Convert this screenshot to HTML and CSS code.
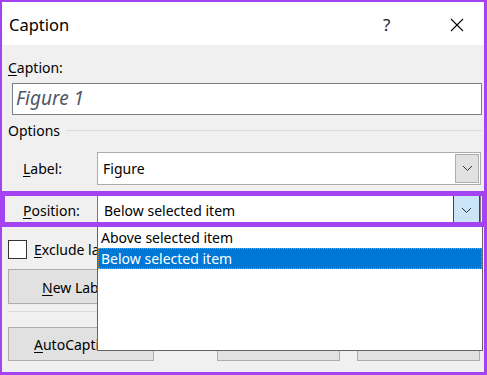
FILE: index.html
```html
<!DOCTYPE html>
<html lang="en">
<head>
    <meta charset="UTF-8">
    <title>Caption</title>
    <link rel="stylesheet" href="styles.css">
</head>
<body>

<div class="dialog">
    <div class="titlebar">
        <span class="title">Caption</span>
        <span class="help">?</span>
        <svg class="close" width="14" height="14" viewBox="0 0 14 14">
            <path d="M1 1 L13 13 M13 1 L1 13" stroke="#000" stroke-width="1.1" fill="none"/>
        </svg>
    </div>

    <div class="content">
        <div class="field-label"><u>C</u>aption:</div>
        <div class="caption-input">Figure 1</div>

        <div class="group-head">
            <span>Options</span>
            <span class="rule"></span>
        </div>

        <div class="row label-row">
            <span class="row-label"><u>L</u>abel:</span>
            <div class="combo">
                <span class="combo-text">Figure</span>
                <span class="combo-btn">
                    <svg width="11" height="7" viewBox="0 0 11 7"><path d="M1 1 L5.5 5.5 L10 1" stroke="#333" fill="none"/></svg>
                </span>
            </div>
        </div>

        <div class="row position-row">
            <span class="row-label"><u>P</u>osition:</span>
            <div class="combo focused">
                <span class="combo-text">Below selected item</span>
                <span class="combo-btn">
                    <svg width="11" height="7" viewBox="0 0 11 7"><path d="M1 1 L5.5 5.5 L10 1" stroke="#333" fill="none"/></svg>
                </span>
            </div>
        </div>

        <div class="check-row">
            <span class="checkbox"></span>
            <span class="clip check-text"><u>E</u>xclude label from caption</span>
        </div>

        <div class="btn-row first">
            <button class="btn wide"><span class="clip new-text"><u>N</u>ew Label...</span></button>
            <button class="btn"></button>
            <button class="btn"></button>
        </div>

        <div class="sep"></div>

        <div class="btn-row">
            <button class="btn wide"><span class="clip auto-text"><u>A</u>utoCaption...</span></button>
            <button class="btn"></button>
            <button class="btn"></button>
        </div>
    </div>

    <div class="highlight"></div>

    <ul class="droplist">
        <li>Above selected item</li>
        <li class="selected">Below selected item</li>
    </ul>
</div>

</body>
</html>
```

FILE: styles.css
```css
body {
    margin: 0;
    font-family: "Noto Sans", "Open Sans", sans-serif;
    font-size: 14px;
    color: #000;
    background: #fff;
}
.dialog {
    position: relative;
    width: 487px;
    height: 375px;
    box-sizing: border-box;
    border-style: solid;
    border-color: #a542f2;
    border-width: 2px 3px 3px 2px;
    background-color: #f0f0f0;
    overflow: hidden;
}
.titlebar {
    height: 43px;
    background-color: #fff;
    display: flex;
    align-items: center;
    padding-left: 7px;
}
.title {
    font-size: 16.5px;
    flex: 1;
    margin-top: 1px;
}
.help {
    font-size: 17px;
    color: #222;
    width: 67px;
    margin-top: 1px;
}
.close {
    margin-right: 20px;
    margin-top: 2px;
}
.content {
    padding: 0 2px 0 6px;
}
u {
    text-decoration-thickness: 1px;
    text-underline-offset: 2px;
}
.field-label {
    margin-top: 13px;
    height: 20px;
    line-height: 20px;
}
.caption-input {
    margin: 5px 0 0 4px;
    height: 32px;
    box-sizing: border-box;
    border: 1px solid #7a7f87;
    background-color: #fff;
    font-style: italic;
    font-size: 19px;
    line-height: 29px;
    padding-left: 3px;
    color: #4f5868;
}
.group-head {
    margin-top: 4px;
    height: 22px;
    display: flex;
    align-items: center;
    gap: 6px;
}
.group-head .rule {
    flex: 1;
    height: 1px;
    background-color: #dcdcdc;
}
.row {
    display: flex;
    align-items: center;
    height: 33px;
}
.label-row {
    margin-top: 11px;
}
.position-row {
    margin-top: 9px;
}
.row-label {
    width: 74px;
    padding-left: 15px;
}
.combo {
    width: 384px;
    height: 33px;
    box-sizing: border-box;
    border: 1px solid #acacac;
    background-color: #fff;
    display: flex;
    align-items: stretch;
    padding: 1px 1px 1px 0;
}
.combo-text {
    flex: 1;
    line-height: 29px;
    padding-left: 5px;
}
.combo-btn {
    width: 24px;
    box-sizing: border-box;
    border: 1px solid #adadad;
    background-color: #e1e1e1;
    display: flex;
    align-items: center;
    justify-content: center;
}
.focused {
    border-color: #7a7a7a;
    padding: 0;
}
.focused .combo-text {
    padding-left: 6px;
    line-height: 31px;
}
.focused .combo-btn {
    width: 27px;
    background-color: #cce4f7;
    border-color: #005499;
}
.check-row {
    margin-top: 13px;
    height: 19px;
    display: flex;
    align-items: center;
    gap: 7px;
}
.checkbox {
    width: 19px;
    height: 19px;
    box-sizing: border-box;
    border: 1px solid #333;
    background-color: #fff;
}
.clip {
    display: inline-block;
    overflow: hidden;
    white-space: nowrap;
    vertical-align: middle;
}
.check-text {
    width: 63px;
}
.btn-row {
    display: flex;
    margin-top: 15px;
    height: 34px;
}
.btn-row.first {
    margin-top: 10px;
    height: 35px;
}
.btn {
    font-family: inherit;
    font-size: 14px;
    width: 123px;
    height: 100%;
    border: 1px solid #adadad;
    background-color: #e1e1e1;
    padding: 0;
    margin-left: 17px;
    text-align: left;
}
.btn.wide {
    width: 146px;
    margin-left: 0;
    margin-right: 46px;
}
.new-text {
    margin-left: 33px;
    width: 56px;
}
.auto-text {
    margin-left: 25px;
    width: 64px;
}
.sep {
    margin-top: 7px;
    height: 1px;
    background-color: #dadada;
}
.highlight {
    position: absolute;
    left: -2px;
    right: -3px;
    top: 189px;
    height: 36px;
    box-sizing: border-box;
    border: 5px solid #a542f2;
    z-index: 2;
}
.droplist {
    position: absolute;
    left: 95px;
    top: 223px;
    width: 386px;
    height: 126px;
    box-sizing: border-box;
    margin: 0;
    padding: 0;
    list-style: none;
    border: 1px solid #646464;
    background-color: #fff;
    z-index: 1;
}
.droplist li {
    height: 20px;
    line-height: 20px;
    padding-left: 3px;
}
.droplist li.selected {
    height: 21px;
    box-sizing: border-box;
    border: 1px dotted #f08c00;
    background-color: #0078d7;
    color: #fff;
    line-height: 19px;
    padding-left: 2px;
}
.droplist li:first-child {
    padding-top: 2px;
}
```
